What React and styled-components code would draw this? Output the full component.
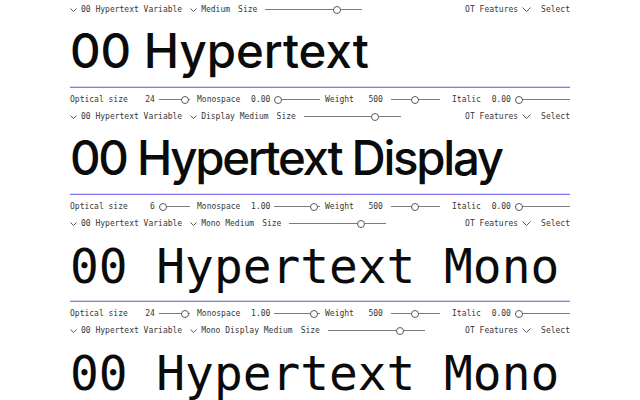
import React from "react";
import styled, { createGlobalStyle } from "styled-components";

const GlobalStyle = createGlobalStyle`
  html, body { margin: 0; padding: 0; background: #fff; }
  body { font-family: "DejaVu Sans Mono", monospace; }
`;

const Page = styled.main`
  width: 500px;
  margin: 0 auto;
  display: flex;
  flex-direction: column;
`;

const Section = styled.section`
  display: flex;
  flex-direction: column;
`;

const Toolbar = styled.div`
  height: 17px;
  padding-top: 1px;
  display: flex;
  align-items: center;
  font-family: "DejaVu Sans Mono", monospace;
  font-size: 8px;
  color: #363636;
  white-space: nowrap;
`;

const Group = styled.div`
  display: flex;
  align-items: center;
  gap: ${(p) => p.$gap ?? 8}px;
`;

const Picker = styled.span`
  display: inline-flex;
  align-items: center;
  gap: 4px;
`;

const Spacer = styled.div`
  flex: 1;
`;

const Label = styled.span`
  line-height: 10px;
`;

const Track = styled.div`
  position: relative;
  height: 9px;
  flex: ${(p) => (p.$w ? "none" : "1")};
  width: ${(p) => (p.$w ? `${p.$w}px` : "auto")};
  margin-left: ${(p) => p.$gap ?? 0}px;
  &::before {
    content: "";
    position: absolute;
    left: 0;
    right: 0;
    top: 4px;
    height: 1px;
    background: #7c7c7c;
  }
`;

const Knob = styled.span`
  position: absolute;
  top: 0.5px;
  width: 8px;
  height: 8px;
  box-sizing: border-box;
  border: 1px solid #5a5a5a;
  border-radius: 50%;
  background: #fff;
  transform: translateX(-50%);
`;

const Heading = styled.h1`
  margin: 0;
  height: 69px;
  font-family: ${(p) => p.$family};
  font-size: ${(p) => p.$size}px;
  font-weight: ${(p) => p.$weight};
  letter-spacing: ${(p) => p.$ls}px;
  line-height: ${(p) => p.$lh}px;
  color: #0b0b0b;
  white-space: nowrap;
  overflow: hidden;
`;

const Divider = styled.div`
  height: 0;
  border-top: 1px solid #8778f0;
  box-shadow: 0 -1px 0 rgba(150, 136, 240, 0.35);
`;

const ParamRow = styled.div`
  height: 15px;
  padding-top: 4px;
  display: flex;
  align-items: center;
  font-family: "DejaVu Sans Mono", monospace;
  font-size: 8px;
  color: #363636;
  white-space: nowrap;
`;

const Param = styled.div`
  display: flex;
  align-items: center;
  width: ${(p) => p.$w}px;
  margin-left: ${(p) => p.$ml}px;
`;

const Value = styled.span`
  width: ${(p) => p.$w}px;
  text-align: right;
`;

function Chevron({ big }) {
  const w = big ? 9 : 7;
  const h = big ? 5 : 4;
  return (
    <svg width={w} height={h} viewBox={`0 0 ${w} ${h}`} style={{ display: "block" }}>
      <polyline
        points={`0.5 0.5 ${w / 2} ${h - 0.5} ${w - 0.5} 0.5`}
        fill="none"
        stroke="#444"
        strokeWidth="0.9"
      />
    </svg>
  );
}

function Slider({ w, gap, f }) {
  return (
    <Track $w={w} $gap={gap}>
      <Knob style={{ left: `calc(4px + ${f} * (100% - 8px))` }} />
    </Track>
  );
}

const paramLayout = [
  { label: "Optical size", w: 120, ml: 0, vw: 27, gap: 4 },
  { label: "Monospace", w: 123, ml: 7, vw: 30, gap: 4 },
  { label: "Weight", w: 115, ml: 5, vw: 29, gap: 8 },
  { label: "Italic", w: 118, ml: 12, vw: 30, gap: 4 },
];

const sans = '"Inter", "Liberation Sans", sans-serif';
const mono = '"DejaVu Sans Mono", monospace';

const sections = [
  {
    style: "Medium",
    title: "00 Hypertext",
    font: { family: sans, size: 47.4, weight: 500, ls: 0, lh: 66 },
    params: [
      ["24", 0.96],
      ["0.00", 0],
      ["500", 0.5],
      ["0.00", 0],
    ],
  },
  {
    style: "Display Medium",
    title: "00 Hypertext Display",
    font: { family: sans, size: 47.4, weight: 500, ls: -2.3, lh: 66 },
    params: [
      ["6", 0],
      ["1.00", 0.95],
      ["500", 0.5],
      ["0.00", 0],
    ],
  },
  {
    style: "Mono Medium",
    title: "00 Hypertext Mono",
    font: { family: mono, size: 47.8, weight: 400, ls: 0, lh: 69 },
    params: [
      ["24", 0.96],
      ["1.00", 0.95],
      ["500", 0.5],
      ["0.00", 0],
    ],
  },
  {
    style: "Mono Display Medium",
    title: "00 Hypertext Mono",
    font: { family: mono, size: 47.8, weight: 400, ls: 0, lh: 69 },
    params: [
      ["24", 0.96],
      ["1.00", 0.95],
      ["500", 0.5],
      ["0.00", 0],
    ],
  },
];

export default function App() {
  return (
    <>
      <GlobalStyle />
      <Page>
        {sections.map((s, i) => (
          <Section key={i}>
            <Toolbar>
              <Group>
                <Picker>
                  <Chevron />
                  <Label>00 Hypertext Variable</Label>
                </Picker>
                <Picker>
                  <Chevron />
                  <Label>{s.style}</Label>
                </Picker>
                <Label>Size</Label>
                <Slider w={97} f={0.76} />
              </Group>
              <Spacer />
              <Group $gap={10}>
                <Picker>
                  <Label>OT Features</Label>
                  <Chevron big />
                </Picker>
                <Label>Select</Label>
              </Group>
            </Toolbar>
            <Heading
              $family={s.font.family}
              $size={s.font.size}
              $weight={s.font.weight}
              $ls={s.font.ls}
              $lh={s.font.lh}
            >
              {s.title}
            </Heading>
            <Divider />
            <ParamRow>
              {paramLayout.map((p, j) => (
                <Param key={j} $w={p.w} $ml={p.ml}>
                  <Label>{p.label}</Label>
                  <Value $w={p.vw}>{s.params[j][0]}</Value>
                  <Slider gap={p.gap} f={s.params[j][1]} />
                </Param>
              ))}
            </ParamRow>
          </Section>
        ))}
      </Page>
    </>
  );
}
